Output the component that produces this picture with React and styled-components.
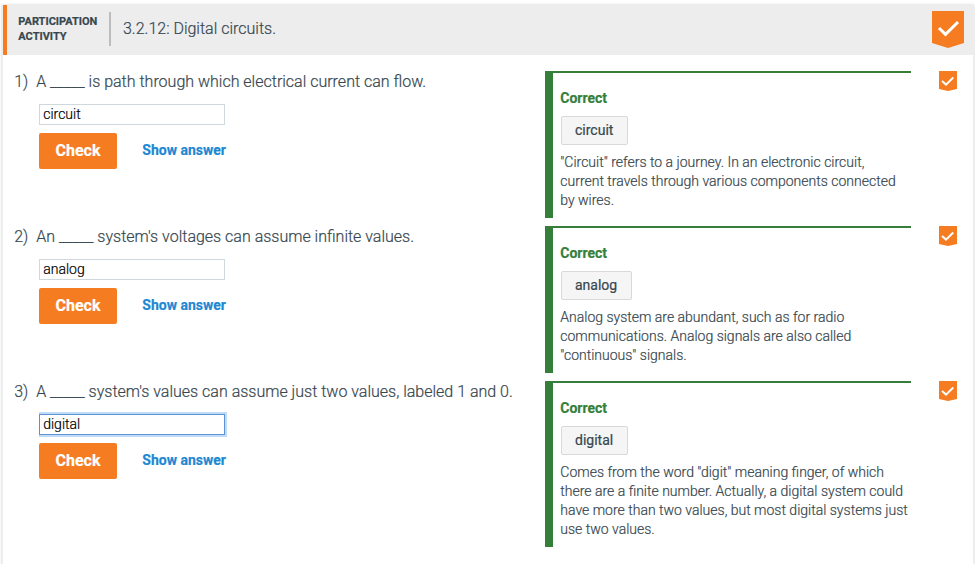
import React from 'react';
import styled, { createGlobalStyle } from 'styled-components';

const GlobalStyle = createGlobalStyle`
  * { box-sizing: border-box; }
  body {
    margin: 0;
    background: #fff;
    color: #37474f;
    font-family: Roboto, "Liberation Sans", sans-serif;
    font-weight: 300;
    -webkit-text-stroke: 0.2px;
    overflow: hidden;
  }
`;

const Page = styled.div`
  height: 564px;
  padding: 4px 0 0 1px;
  overflow: hidden;
`;

const Card = styled.section`
  height: 580px;
  border: 2px solid #ededed;
  border-top-width: 1px;
  border-radius: 3px;
  box-shadow: 0 0 3px rgba(0, 0, 0, 0.08);
`;

const Header = styled.header`
  display: flex;
  align-items: flex-start;
  height: 50px;
  padding: 6px 9px 0 11.3px;
  border-left: 4px solid #f57c20;
  background: #ededed;
`;

const Kind = styled.div`
  width: 92.7px;
  height: 34px;
  margin-top: 1px;
  padding-top: 2px;
  border-right: 2px solid #bdbdbd;
  font-size: 11px;
  line-height: 15px;
  font-weight: 700;
  white-space: nowrap;
`;

const Title = styled.h1`
  flex: 1;
  margin: 8px 0 0 12px;
  font-size: 16px;
  line-height: 20px;
  font-weight: 300;
`;

const Questions = styled.div`
  display: flex;
  flex-direction: column;
  gap: 8px;
  padding: 16px 16px 0 11px;
`;

const Question = styled.article`
  display: grid;
  grid-template-columns: 531px 366px 18px;
  column-gap: 0;
  justify-content: start;

  & > :last-child { margin-left: 28px; }
`;

const Prompt = styled.div`
  display: flex;
  padding: 1px 0 0 0.2px;
  font-size: 16px;
  line-height: 20px;
  white-space: nowrap;
`;

const Number = styled.span`
  width: 22px;
`;

const Answer = styled.div`
  margin-left: 25px;
`;

const Field = styled.input`
  display: block;
  width: 186px;
  height: 21px;
  margin-top: 12px;
  padding: 0 3px 2px 3.2px;
  border: 1px solid ${(p) => (p.$active ? '#5b93d3' : '#cfd8dc')};
  border-radius: 0;
  outline: none;
  box-shadow: ${(p) => (p.$active ? '0 0 0 2px #c0dcf7' : 'none')};
  clip-path: inset(-2px -2px -2px 0);
  background: #fff;
  color: #000;
  font: 300 14px Roboto, "Liberation Sans", sans-serif;
`;

const Actions = styled.div`
  display: flex;
  align-items: center;
  gap: 25.3px;
  margin-top: 8px;
`;

const CheckButton = styled.button`
  width: 78px;
  height: 36px;
  padding: 0 0 1px;
  border: 0;
  border-radius: 2px;
  background: #f57c20;
  color: #fff;
  font: 700 16px Roboto, "Liberation Sans", sans-serif;
`;

const ShowAnswer = styled.button`
  padding: 0 0 2px;
  border: 0;
  background: none;
  color: #1e88d2;
  font: 700 14px Roboto, "Liberation Sans", sans-serif;
`;

const Explanation = styled.div`
  height: ${(p) => p.$height}px;
  padding: 17px 0 0 7.3px;
  border-top: 2px solid #357f3a;
  border-left: 8px solid #357f3a;
  font-size: 14px;
  line-height: 19px;
  white-space: nowrap;
`;

const Verdict = styled.div`
  color: #357f3a;
  font-weight: 700;
  line-height: 17px;
`;

const Chip = styled.div`
  width: max-content;
  height: 29px;
  margin: 9px 0 8px 0.7px;
  padding: 0 13.4px 0 13px;
  border: 1px solid #d9d9d9;
  border-radius: 2px;
  background: #f5f5f5;
  font-weight: 400;
  line-height: 27px;
`;

const Line = styled.div``;

function Badge({ large }) {
  return large ? (
    <svg width="32" height="37" viewBox="0 0 32 37">
      <path d="M0 0H32V32L16 37L0 32Z" fill="#f57c20" />
      <path d="M7 17L13.5 23.3L26 11" fill="none" stroke="#fff" strokeWidth="3" />
    </svg>
  ) : (
    <svg width="18" height="20" viewBox="0 0 18 20">
      <path d="M0 0H18V18L9 20L0 18Z" fill="#f57c20" />
      <path d="M3 10L7 13.6L14.3 6.5" fill="none" stroke="#fff" strokeWidth="2" />
    </svg>
  );
}

const questions = [
  {
    prompt: 'A _____ is path through which electrical current can flow.',
    answer: 'circuit',
    height: 147,
    lines: [
      '"Circuit" refers to a journey. In an electronic circuit,',
      'current travels through various components connected',
      'by wires.',
    ],
  },
  {
    prompt: "An _____ system's voltages can assume infinite values.",
    answer: 'analog',
    height: 147,
    lines: [
      'Analog system are abundant, such as for radio',
      'communications. Analog signals are also called',
      '"continuous" signals.',
    ],
  },
  {
    prompt: "A _____ system's values can assume just two values, labeled 1 and 0.",
    answer: 'digital',
    height: 166,
    active: true,
    lines: [
      'Comes from the word "digit" meaning finger, of which',
      'there are a finite number. Actually, a digital system could',
      'have more than two values, but most digital systems just',
      'use two values.',
    ],
  },
];

export default function App() {
  return (
    <Page>
      <GlobalStyle />
      <Card>
        <Header>
          <Kind>PARTICIPATION<br />ACTIVITY</Kind>
          <Title>3.2.12: Digital circuits.</Title>
          <Badge large />
        </Header>
        <Questions>
          {questions.map((q, i) => (
            <Question key={q.answer}>
              <div>
                <Prompt>
                  <Number>{i + 1})</Number>
                  <span>{q.prompt}</span>
                </Prompt>
                <Answer>
                  <Field defaultValue={q.answer} $active={q.active} spellCheck={false} />
                  <Actions>
                    <CheckButton>Check</CheckButton>
                    <ShowAnswer>Show answer</ShowAnswer>
                  </Actions>
                </Answer>
              </div>
              <Explanation $height={q.height}>
                <Verdict>Correct</Verdict>
                <Chip>{q.answer}</Chip>
                {q.lines.map((line) => <Line key={line}>{line}</Line>)}
              </Explanation>
              <Badge />
            </Question>
          ))}
        </Questions>
      </Card>
    </Page>
  );
}
